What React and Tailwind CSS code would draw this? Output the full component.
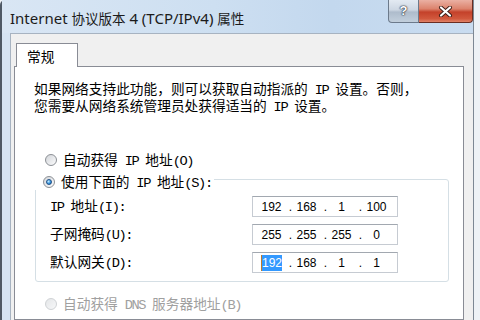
import { Fragment } from 'react'

// latin runs use a mono face squeezed to half-width, like SimSun's ASCII
const M = ({ children }) => (
    <span className="font-['Liberation_Mono',monospace] tracking-[-1.35px]">{children}</span>
)

function Radio({ checked, disabled }) {
    return (
        <span
            className={
                'flex items-center justify-center w-[12px] h-[12px] shrink-0 rounded-full border ' +
                (disabled
                    ? 'border-[#cfd2d5] bg-[linear-gradient(135deg,#e4e6e8,#f7f8f9)]'
                    : 'border-[#8c9095] bg-[linear-gradient(135deg,#d3d6da,#fbfbfc)]')
            }
        >
            {checked && (
                <span className="w-[6px] h-[6px] rounded-full border border-[#1f4f86] bg-[radial-gradient(circle_at_35%_35%,#c8ecff,#3b9be3_55%,#145996)]" />
            )}
        </span>
    )
}

function RadioRow({ checked, disabled, children }) {
    return (
        <div className={'flex items-center h-[16px] gap-[6px] pl-[10px] whitespace-nowrap leading-[16px] ' + (disabled ? 'text-[#a0a0a0]' : '')}>
            <Radio checked={checked} disabled={disabled} />
            <span>{children}</span>
        </div>
    )
}

function IpBox({ parts, selectFirst }) {
    return (
        <div className="w-[146px] h-[21px] border border-[#c6cbd2] border-t-[#a2a8b0] bg-white flex items-center pl-[4px] font-['Liberation_Sans',sans-serif] text-[12px] leading-[16px] text-black">
            {parts.map((p, i) => (
                <Fragment key={i}>
                    {i > 0 && <span className="w-[6px] text-right">.</span>}
                    <span className="w-[29px] text-center">
                        {selectFirst && i === 0 ? (
                            <span className="inline-block bg-[#3399ff] text-white border-l border-[#c07a2a]">{p}</span>
                        ) : (
                            p
                        )}
                    </span>
                </Fragment>
            ))}
        </div>
    )
}

function FieldRow({ label, parts, selectFirst }) {
    return (
        <div className="flex items-center h-[21px]">
            <div className="w-[202px] whitespace-nowrap leading-[16px]">{label}</div>
            <IpBox parts={parts} selectFirst={selectFirst} />
        </div>
    )
}

export default function App() {
    return (
        <div className="w-[480px] h-[320px] overflow-hidden bg-[#eef2f6]">
            <div className="w-[474px] h-[320px] flex flex-col bg-[#d6e4f3] border-l-2 border-r border-l-[#4f5965] border-r-[#7d8894] rounded-tl-[5px]">
                {/* title bar */}
                <div className="h-[33px] shrink-0 flex justify-between items-start bg-[linear-gradient(90deg,#d9e6f4_0%,#cddff1_45%,#c3d8ee_70%,#c9dcf0_100%)]">
                    <div className="mt-[8px] pl-[8px] leading-[20px] text-[15px] text-[#1b1b1b] whitespace-nowrap font-['Noto_Sans','Noto_Sans_CJK_SC',sans-serif]">
                        Internet <span className="text-[13.5px] font-['Noto_Sans_CJK_SC',sans-serif]">协议版本</span> 4 (TCP/IPv4){' '}
                        <span className="text-[13.5px] font-['Noto_Sans_CJK_SC',sans-serif]">属性</span>
                    </div>
                    <div className="flex">
                        <div className="w-[31px] h-[23px] flex items-center justify-center rounded-bl-[4px] border border-t-0 border-[#6c7a8b] bg-[linear-gradient(180deg,#e3eaf2_0%,#cdd7e3_45%,#aebccc_55%,#c2cfdc_100%)] text-white font-bold text-[13px] font-['Liberation_Sans',sans-serif] [text-shadow:0_0_1px_#2c3440,0_0_1px_#2c3440,0_0_2px_#2c3440]">
                            ?
                        </div>
                        <div className="w-[54px] h-[23px] flex items-center justify-center rounded-br-[4px] border border-t-0 border-l-0 border-[#6a2d22] bg-[linear-gradient(180deg,#eab0a3_0%,#dc836d_40%,#c4412a_55%,#d1583d_85%,#e08368_100%)]">
                            <svg width="15" height="11" viewBox="0 0 15 11">
                                <path d="M3 1.5 L12 9.5 M12 1.5 L3 9.5" stroke="#3b1c16" strokeWidth="4" strokeLinecap="round" />
                                <path d="M3 1.5 L12 9.5 M12 1.5 L3 9.5" stroke="#ffffff" strokeWidth="2.2" strokeLinecap="round" />
                            </svg>
                        </div>
                    </div>
                </div>

                {/* dialog body */}
                <div className="flex-1 min-h-0 ml-[8px] bg-[#f0f0f0] border-l border-t border-[#a7b3c1] pl-[3px] pr-[9px] pt-[9px] flex flex-col">
                    <div className="flex">
                        <div className="relative z-10 -mb-px ml-[2px] w-[62px] h-[24px] bg-white border border-b-0 border-[#898c95] pl-[10px] pt-[4px] leading-[16px] text-[13.7px] font-['Noto_Sans_CJK_SC',sans-serif] text-black">
                            常规
                        </div>
                    </div>
                    <div className="flex-1 min-h-0 overflow-hidden bg-white border border-[#898c95] pl-[20px] pr-[14px] pt-[14px] flex flex-col text-[13.7px] leading-[13px] text-black font-['Noto_Sans_CJK_SC',sans-serif]">
                        <div className="-ml-px whitespace-nowrap leading-[14px]">
                            <div>如果网络支持此功能，则可以获取自动指派的<M> IP </M>设置。否则，</div>
                            <div>您需要从网络系统管理员处获得适当的<M> IP </M>设置。</div>
                        </div>

                        <div className="mt-[37px]">
                            <RadioRow>
                                自动获得<M> IP </M>地址<M>(O)</M>
                            </RadioRow>
                        </div>

                        <div className="relative mt-[11px] shrink-0 border border-[#d5dfe5] rounded-[3px] pt-[16px] pl-[14px] pb-[8px] flex flex-col gap-[7px]">
                            <div className="absolute top-[-6px] left-[-3px] bg-white pr-[2px]">
                                <RadioRow checked>
                                    使用下面的<M> IP </M>地址<M>(S):</M>
                                </RadioRow>
                            </div>
                            <FieldRow label={<><M>IP </M>地址<M>(I):</M></>} parts={['192', '168', '1', '100']} />
                            <FieldRow label={<>子网掩码<M>(U):</M></>} parts={['255', '255', '255', '0']} />
                            <FieldRow label={<>默认网关<M>(D):</M></>} parts={['192', '168', '1', '1']} selectFirst />
                        </div>

                        <div className="mt-[14px]">
                            <RadioRow disabled>
                                自动获得<M> DNS </M>服务器地址<M>(B)</M>
                            </RadioRow>
                        </div>

                        <div className="relative mt-[11px] shrink-0 h-[60px] border border-[#d5dfe5] rounded-[3px]">
                            <div className="absolute top-[-6px] left-[-3px] bg-white pr-[2px]">
                                <RadioRow checked>
                                    使用下面的<M> DNS </M>服务器地址<M>(E):</M>
                                </RadioRow>
                            </div>
                        </div>
                    </div>
                </div>
            </div>
        </div>
    )
}
